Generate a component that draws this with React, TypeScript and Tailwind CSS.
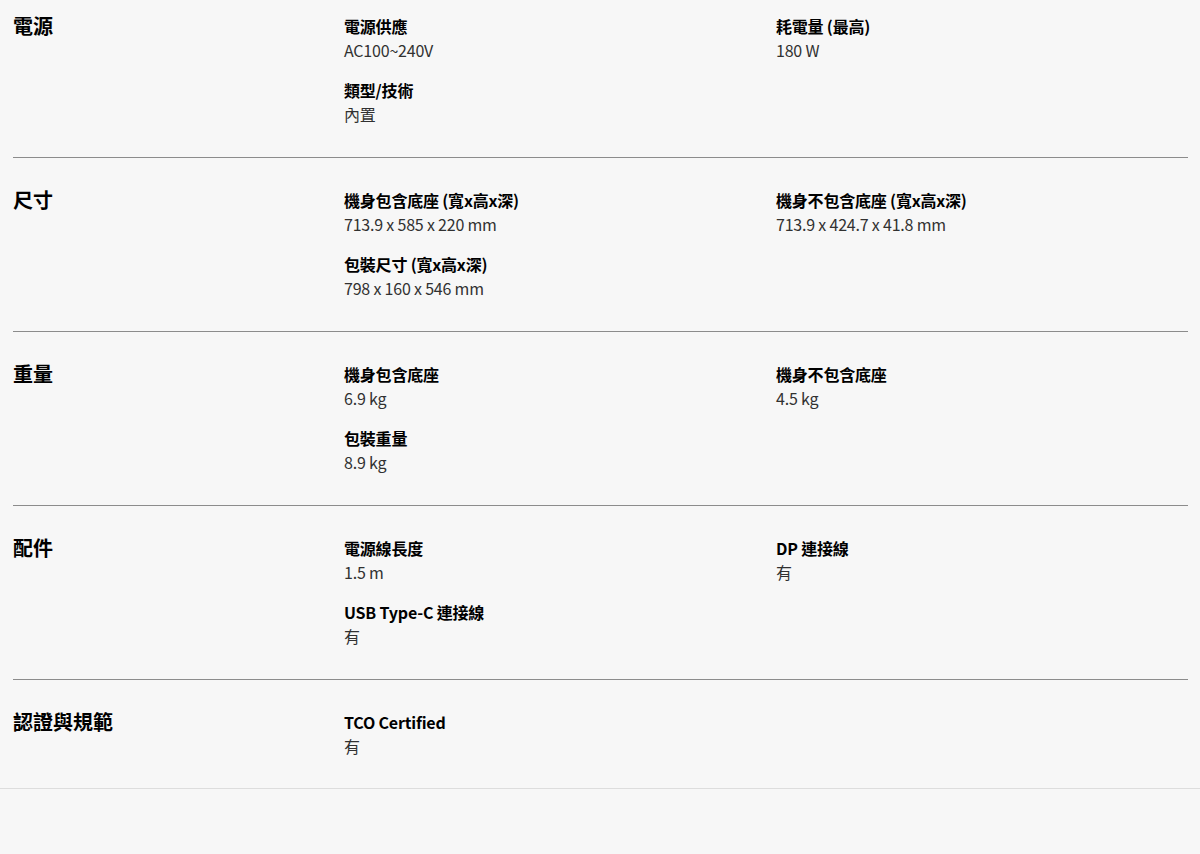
import React from 'react';

type Spec = { label: string; value: string };
type Section = { title: string; left: Spec[]; right: Spec[] };

const sections: Section[] = [
  {
    title: '電源',
    left: [
      { label: '電源供應', value: 'AC100~240V' },
      { label: '類型/技術', value: '內置' },
    ],
    right: [{ label: '耗電量 (最高)', value: '180 W' }],
  },
  {
    title: '尺寸',
    left: [
      { label: '機身包含底座 (寬x高x深)', value: '713.9 x 585 x 220 mm' },
      { label: '包裝尺寸 (寬x高x深)', value: '798 x 160 x 546 mm' },
    ],
    right: [{ label: '機身不包含底座 (寬x高x深)', value: '713.9 x 424.7 x 41.8 mm' }],
  },
  {
    title: '重量',
    left: [
      { label: '機身包含底座', value: '6.9 kg' },
      { label: '包裝重量', value: '8.9 kg' },
    ],
    right: [{ label: '機身不包含底座', value: '4.5 kg' }],
  },
  {
    title: '配件',
    left: [
      { label: '電源線長度', value: '1.5 m' },
      { label: 'USB Type-C 連接線', value: '有' },
    ],
    right: [{ label: 'DP 連接線', value: '有' }],
  },
  {
    title: '認證與規範',
    left: [{ label: 'TCO Certified', value: '有' }],
    right: [],
  },
];

function SpecList({ items }: { items: Spec[] }) {
  return (
    <div className="flex flex-col gap-4">
      {items.map((s) => (
        <div key={s.label}>
          <p className="text-[16px] leading-6 font-bold text-black tracking-[-0.2px]">{s.label}</p>
          <p className="text-[16px] leading-6 text-[#313131] tracking-[-0.2px]">{s.value}</p>
        </div>
      ))}
    </div>
  );
}

export default function App() {
  const last = sections.length - 1;
  return (
    <div
      className="min-h-[854px] bg-[#f7f7f7]"
      style={{ fontFamily: '"Noto Sans CJK TC", "Noto Sans", sans-serif' }}
    >
      <div className="pl-[13px] pr-[12px]">
        {sections.map((sec, i) => (
          <div
            key={sec.title}
            className={
              'grid grid-cols-[331px_432px_1fr] ' +
              (i === 0 ? 'pt-[14px] ' : 'pt-[30px] ') +
              (i < last ? 'pb-[31px] border-b border-[#8c8c8c]' : 'pb-[30px]')
            }
          >
            <h2 className="text-[20px] leading-6 font-bold text-black">{sec.title}</h2>
            <SpecList items={sec.left} />
            <SpecList items={sec.right} />
          </div>
        ))}
      </div>
      <div className="border-b border-[#dddddd]" />
    </div>
  );
}
